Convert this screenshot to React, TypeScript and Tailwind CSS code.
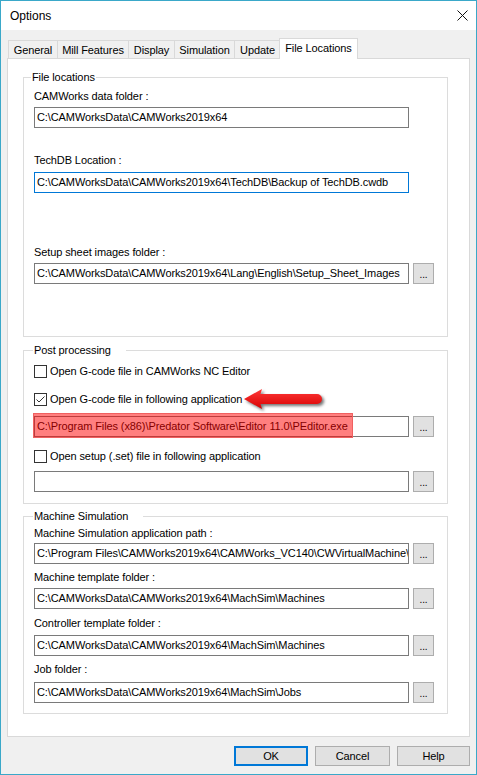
import React from "react";

const tabs = [
  { name: "General", w: 50 },
  { name: "Mill Features", w: 72 },
  { name: "Display", w: 47 },
  { name: "Simulation", w: 61 },
  { name: "Update", w: 47 },
];

function Field({
  value,
  focused,
  browse,
}: {
  value: string;
  focused?: boolean;
  browse?: boolean;
}) {
  return (
    <div className="flex items-center gap-[4px]">
      <div
        className={`h-[21px] w-[375px] bg-white border ${
          focused ? "border-[#0078d7]" : "border-[#7a7a7a]"
        } pl-[2px] leading-[19px] whitespace-nowrap overflow-hidden`}
      >
        {value}
      </div>
      {browse && <BrowseButton />}
    </div>
  );
}

function BrowseButton() {
  return (
    <div className="h-[21px] w-[21px] bg-[#e1e1e1] border border-[#adadad] flex items-end justify-center leading-[17px] text-[10px]">
      ...
    </div>
  );
}

function Check({ label, checked }: { label: string; checked?: boolean }) {
  return (
    <div className="flex items-center h-[15px]">
      <span className="w-[13px] h-[13px] border border-[#333333] bg-white flex items-center justify-center">
        {checked && (
          <svg width="11" height="11" viewBox="0 0 11 11">
            <polyline
              points="1.5,5.5 4,8 9.5,2.5"
              fill="none"
              stroke="#333333"
              strokeWidth="1"
            />
          </svg>
        )}
      </span>
      <span className="ml-[3px] leading-[15px]">{label}</span>
    </div>
  );
}

function RedArrow() {
  return (
    <svg
      width="84"
      height="26"
      viewBox="0 0 84 26"
      className="absolute left-[208px] top-[-5px]"
      style={{ filter: "drop-shadow(2px 2px 1.5px rgba(0,0,0,0.55))" }}
    >
      <defs>
        <linearGradient id="arrowFill" x1="0" y1="0" x2="0" y2="1">
          <stop offset="0" stopColor="#ff3a3a" />
          <stop offset="1" stopColor="#d80000" />
        </linearGradient>
      </defs>
      <path
        d="M2 12 L20 2 L18.5 7 L75 7 A5 5 0 0 1 75 17 L18.5 17 L20 22 Z"
        fill="url(#arrowFill)"
      />
    </svg>
  );
}

export default function App() {
  return (
    <div className="w-[477px] h-[775px] border border-[#3aa8c9] bg-[#f0f0f0] flex flex-col font-['Liberation_Sans',Arial,sans-serif] text-[11px] tracking-[-0.1px] text-black">
      {/* title bar */}
      <div className="h-[29px] bg-white flex items-center justify-between pl-[9px] pr-[8px]">
        <span className="text-[12px] tracking-normal">Options</span>
        <svg width="11" height="11" viewBox="0 0 11 11">
          <path d="M0.5 0.5 L10.5 10.5 M10.5 0.5 L0.5 10.5" stroke="#111" strokeWidth="1" />
        </svg>
      </div>

      <div className="flex-1 flex flex-col px-[6px]">
        {/* tabs */}
        <div className="mt-[8px] h-[20px] flex items-end pl-[1px]">
          {tabs.map((t) => (
            <div
              key={t.name}
              style={{ width: t.w }}
              className="h-[18px] -ml-px first:ml-0 border border-b-0 border-[#d9d9d9] flex items-center justify-center leading-[16px]"
            >
              {t.name}
            </div>
          ))}
          <div className="relative z-10 -ml-[2px] -mb-px w-[79px] h-[21px] bg-white border border-b-0 border-[#d9d9d9] flex items-center justify-center pb-[2px]">
            File Locations
          </div>
        </div>

        {/* panel */}
        <div className="h-[679px] bg-white border border-[#d9d9d9] flex flex-col pl-[15px]">
          {/* File locations */}
          <fieldset className="mt-[11px] w-[425px] border border-[#dcdcdc] px-[10px] pb-[52px]">
            <legend className="-ml-[3px] px-[1px] leading-[15px]">File locations</legend>
            <div className="mt-[3px] leading-[16px]">CAMWorks data folder :</div>
            <div className="mt-[3px]">
              <Field value="C:\CAMWorksData\CAMWorks2019x64" />
            </div>
            <div className="mt-[24px] leading-[16px]">TechDB Location :</div>
            <div className="mt-[4px]">
              <Field focused value="C:\CAMWorksData\CAMWorks2019x64\TechDB\Backup of TechDB.cwdb" />
            </div>
            <div className="mt-[51px] leading-[16px]">Setup sheet images folder :</div>
            <div className="mt-[3px]">
              <Field browse value="C:\CAMWorksData\CAMWorks2019x64\Lang\English\Setup_Sheet_Images" />
            </div>
          </fieldset>

          {/* Post processing */}
          <fieldset className="mt-[6px] w-[425px] border border-[#dcdcdc] px-[10px] pb-[11px]">
            <legend className="-ml-[1px] pl-[1px] pr-[15px] leading-[15px]">Post processing</legend>
            <div className="mt-[6px]">
              <Check label="Open G-code file in CAMWorks NC Editor" />
            </div>
            <div className="mt-[13px] relative">
              <Check checked label="Open G-code file in following application" />
              <RedArrow />
            </div>
            <div className="mt-[9px] relative">
              <Field browse value="C:\Program Files (x86)\Predator Software\Editor 11.0\PEditor.exe" />
              <div className="absolute -left-[1px] -top-[3px] w-[320px] h-[25px] bg-[#ff000080] border border-[#f06060]" />
            </div>
            <div className="mt-[12px]">
              <Check label="Open setup (.set) file in following application" />
            </div>
            <div className="mt-[7px]">
              <Field browse value="" />
            </div>
          </fieldset>

          {/* Machine Simulation */}
          <fieldset className="mt-[5px] w-[425px] border border-[#dcdcdc] px-[10px] pb-[10px]">
            <legend className="-ml-[1px] pl-[1px] pr-[15px] leading-[15px]">Machine Simulation</legend>
            <div className="mt-[1px] leading-[16px]">Machine Simulation application path :</div>
            <div className="mt-[2px]">
              <Field browse value="C:\Program Files\CAMWorks2019x64\CAMWorks_VC140\CWVirtualMachine\" />
            </div>
            <div className="mt-[5px] leading-[16px]">Machine template folder :</div>
            <div className="mt-[3px]">
              <Field browse value="C:\CAMWorksData\CAMWorks2019x64\MachSim\Machines" />
            </div>
            <div className="mt-[6px] leading-[16px]">Controller template folder :</div>
            <div className="mt-[4px]">
              <Field browse value="C:\CAMWorksData\CAMWorks2019x64\MachSim\Machines" />
            </div>
            <div className="mt-[5px] leading-[16px]">Job folder :</div>
            <div className="mt-[5px]">
              <Field browse value="C:\CAMWorksData\CAMWorks2019x64\MachSim\Jobs" />
            </div>
          </fieldset>
        </div>

        {/* buttons */}
        <div className="mt-[9px] h-[20px] flex justify-end gap-[7px]">
          <button className="w-[74px] h-[20px] bg-[#e1e1e1] border-2 border-[#0078d7] leading-[16px]">OK</button>
          <button className="w-[75px] h-[20px] bg-[#e1e1e1] border border-[#adadad] leading-[18px]">Cancel</button>
          <button className="w-[73px] h-[20px] bg-[#e1e1e1] border border-[#adadad] leading-[18px]">Help</button>
        </div>
      </div>
    </div>
  );
}
